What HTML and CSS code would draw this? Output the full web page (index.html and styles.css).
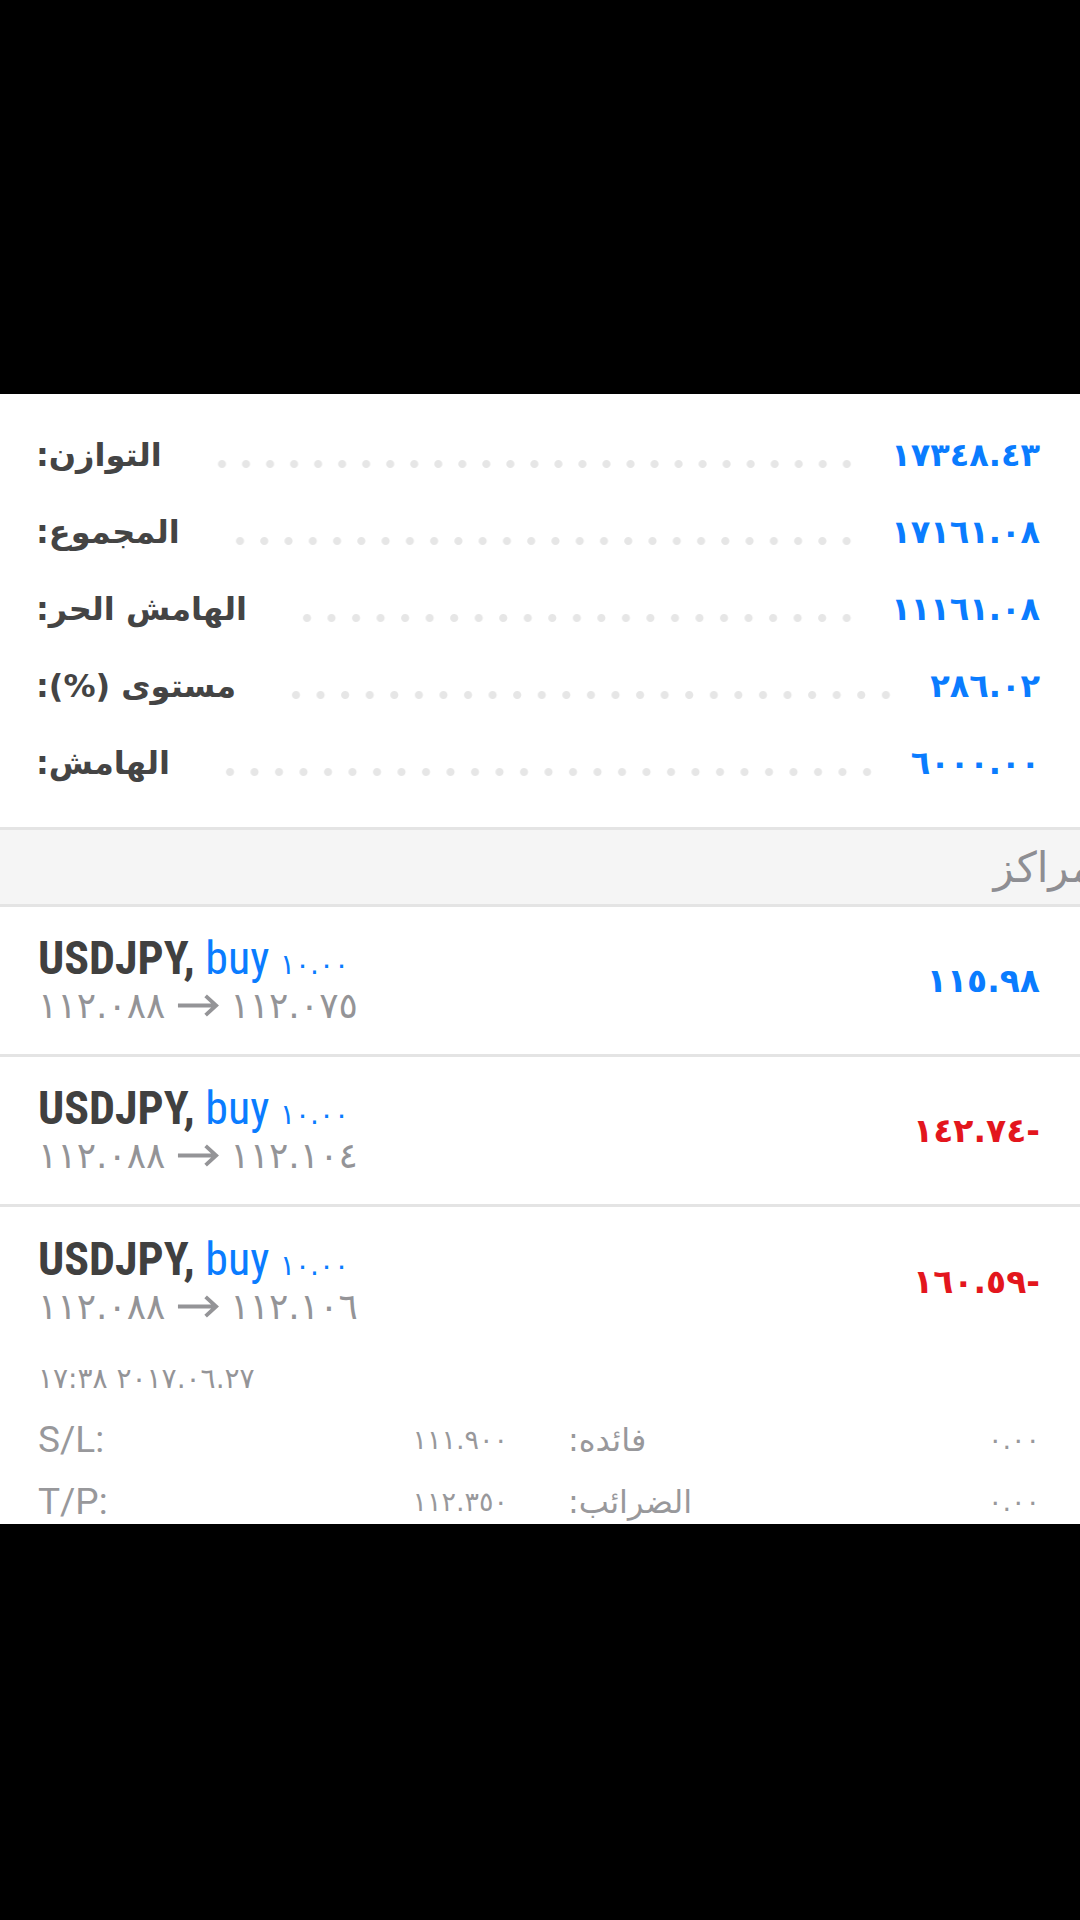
FILE: index.html
```html
<!DOCTYPE html>
<html lang="ar">
<head>
    <meta charset="UTF-8">
    <meta name="viewport" content="width=device-width, initial-scale=1.0">
    <title>Trade</title>
    <link rel="stylesheet" href="styles.css">
</head>
<body>
    <div class="screen" dir="ltr">
        <div class="summary">
            <div class="summary-row">
                <span class="label" dir="rtl">التوازن:</span>
                <span class="dots"></span>
                <span class="value num">١٧٣٤٨.٤٣</span>
            </div>
            <div class="summary-row">
                <span class="label" dir="rtl">المجموع:</span>
                <span class="dots"></span>
                <span class="value num">١٧١٦١.٠٨</span>
            </div>
            <div class="summary-row">
                <span class="label" dir="rtl">الهامش الحر:</span>
                <span class="dots"></span>
                <span class="value num">١١١٦١.٠٨</span>
            </div>
            <div class="summary-row">
                <span class="label" dir="rtl">مستوى (%):</span>
                <span class="dots"></span>
                <span class="value num">٢٨٦.٠٢</span>
            </div>
            <div class="summary-row">
                <span class="label" dir="rtl">الهامش:</span>
                <span class="dots"></span>
                <span class="value num">٦٠٠٠.٠٠</span>
            </div>
        </div>

        <div class="section-head">
            <span class="section-title" dir="rtl">مراكز</span>
        </div>

        <div class="position">
            <div class="pos-main">
                <div class="pos-info">
                    <div class="pos-title"><span class="symbol">USDJPY,</span> <span class="side">buy <span class="lots num">١٠.٠٠</span></span></div>
                    <div class="pos-prices num">١١٢.٠٨٨ <svg class="arrow" viewBox="0 0 44 26"><path d="M1 13H41M30 3L41 13L30 23"/></svg> ١١٢.٠٧٥</div>
                </div>
                <div class="pos-profit num">١١٥.٩٨</div>
            </div>
        </div>

        <div class="position">
            <div class="pos-main">
                <div class="pos-info">
                    <div class="pos-title"><span class="symbol">USDJPY,</span> <span class="side">buy <span class="lots num">١٠.٠٠</span></span></div>
                    <div class="pos-prices num">١١٢.٠٨٨ <svg class="arrow" viewBox="0 0 44 26"><path d="M1 13H41M30 3L41 13L30 23"/></svg> ١١٢.١٠٤</div>
                </div>
                <div class="pos-profit loss num">١٤٢.٧٤-</div>
            </div>
        </div>

        <div class="position open">
            <div class="pos-main">
                <div class="pos-info">
                    <div class="pos-title"><span class="symbol">USDJPY,</span> <span class="side">buy <span class="lots num">١٠.٠٠</span></span></div>
                    <div class="pos-prices num">١١٢.٠٨٨ <svg class="arrow" viewBox="0 0 44 26"><path d="M1 13H41M30 3L41 13L30 23"/></svg> ١١٢.١٠٦</div>
                </div>
                <div class="pos-profit loss num">١٦٠.٥٩-</div>
            </div>
            <div class="pos-time num">١٧:٣٨ ٢٠١٧.٠٦.٢٧</div>
            <div class="pos-details">
                <span class="d-label">S/L:</span>
                <span class="d-value num">١١١.٩٠٠</span>
                <span class="d-label" dir="rtl">فائده:</span>
                <span class="d-value num">٠.٠٠</span>
                <span class="d-label">T/P:</span>
                <span class="d-value num">١١٢.٣٥٠</span>
                <span class="d-label" dir="rtl">الضرائب:</span>
                <span class="d-value num">٠.٠٠</span>
            </div>
        </div>
    </div>
</body>
</html>
```

FILE: styles.css
```css
body {
    margin: 0;
    background-color: #000;
    font-family: "DejaVu Sans", sans-serif;
}
.screen {
    margin-top: 394px;
    height: 1130px;
    background-color: #fff;
    overflow: hidden;
}

/* account summary */
.summary {
    padding: 22px 40px 26px 36px;
    border-bottom: 3px solid #e4e4e4;
}
.summary-row {
    display: flex;
    align-items: center;
    height: 77px;
}
.label {
    font-size: 32px;
    font-weight: bold;
    color: #444;
}
.dots {
    flex: 1;
    align-self: stretch;
    margin: 0 32px 0 48px;
    background-image: radial-gradient(circle, #e6e6e6 3.5px, transparent 4.5px);
    background-size: 24px 24px;
    background-repeat: space no-repeat;
    background-position: 0 36px;
}
.value {
    font-size: 32px;
    font-weight: bold;
    color: #0a7cff;
}
.num {
    unicode-bidi: bidi-override;
    direction: ltr;
}

/* section header */
.section-head {
    display: flex;
    justify-content: flex-end;
    height: 74px;
    align-items: center;
    background-color: #f5f5f5;
    border-bottom: 3px solid #e4e4e4;
    overflow: hidden;
}
.section-title {
    font-size: 42px;
    color: #8e8e93;
    margin-right: -14px;
}

/* positions */
.position {
    border-bottom: 3px solid #e4e4e4;
    padding: 0 40px 0 38px;
}
.pos-main {
    display: flex;
    align-items: center;
    justify-content: space-between;
    height: 147px;
}
.position.open .pos-main {
    height: 148px;
}
.pos-title {
    font-family: "Roboto Condensed", "Liberation Sans Narrow", "DejaVu Sans Condensed", sans-serif;
    font-stretch: condensed;
    font-size: 46px;
    line-height: 44px;
}
.symbol {
    font-weight: bold;
    color: #404040;
}
.side {
    color: #0a7cff;
}
.lots {
    font-family: "DejaVu Sans", sans-serif;
    font-stretch: normal;
    font-size: 28px;
}
.pos-prices {
    font-size: 36px;
    line-height: 38px;
    color: #949497;
}
.arrow {
    width: 42px;
    height: 25px;
    fill: none;
    stroke: #949497;
    stroke-width: 4;
}
.pos-profit {
    font-size: 33px;
    font-weight: bold;
    color: #0a7cff;
}
.pos-profit.loss {
    color: #e3161d;
}
.pos-time {
    margin-top: 4px;
    font-size: 28px;
    color: #949497;
    line-height: 40px;
}
.pos-details {
    display: grid;
    grid-template-columns: 240px 230px 230px 302px;
    margin-top: 10px;
    font-family: "Roboto", "Liberation Sans", sans-serif;
    font-size: 37px;
    line-height: 62px;
    color: #98989b;
}
.d-value {
    text-align: right;
    font-family: "DejaVu Sans", sans-serif;
    font-size: 27px;
}
.d-label[dir="rtl"] {
    text-align: left;
    padding-left: 60px;
    font-family: "DejaVu Sans", sans-serif;
    font-size: 32px;
}
```
